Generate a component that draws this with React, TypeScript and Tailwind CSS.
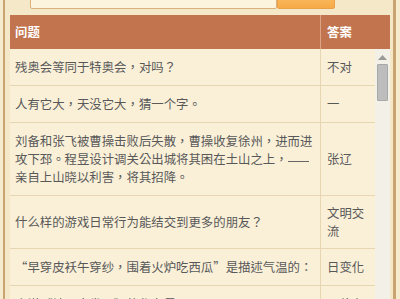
import React from "react";

const rows: { q: React.ReactNode; a: string }[] = [
  { q: "残奥会等同于特奥会，对吗？", a: "不对" },
  { q: "人有它大，天没它大，猜一个字。", a: "一" },
  {
    q: (
      <>
        刘备和张飞被曹操击败后失散，曹操收复徐州，进而进攻下邳。程昱设计调关公出城将其困在土山之上，
        <span className="inline-block w-[21px] border-b border-[#666] align-[2px] h-[8px]" />
        亲自上山晓以利害，将其招降。
      </>
    ),
    a: "张辽",
  },
  { q: "什么样的游戏日常行为能结交到更多的朋友？", a: "文明交流" },
  { q: "“早穿皮袄午穿纱，围着火炉吃西瓜”是描述气温的：", a: "日变化" },
  { q: "小说《地理大发现》的作者是：", a: "哥伦布" },
];

export default function App() {
  return (
    <div
      className="w-[400px] h-[299px] overflow-hidden bg-[#f6ebce] pl-[3px] pr-[4px]"
      style={{ fontFamily: '"Noto Sans CJK TC", "Noto Sans CJK SC", sans-serif' }}
    >
      <div className="h-full border-l-[2px] border-r-[3px] border-[#caa470] bg-[#f5e8c8] pl-[5px] pr-[3px]">
        {/* search bar (cut at top) */}
        <div className="h-[15px] flex items-start">
          <div className="flex h-[30px] -mt-[21px] pl-[20px] shrink-0">
            <div className="w-[247px] h-full bg-[#fdf4de] border border-[#d8b27c] rounded-[2px]" />
            <div className="w-[58px] h-full bg-gradient-to-b from-[#fcd07a] to-[#f7aa48] border border-[#e9a049] rounded-[2px]" />
          </div>
        </div>
        {/* header */}
        <div className="flex h-[34px] bg-[#c1744e] text-white font-bold text-[12.4px] leading-[18px]">
          <div className="w-[311px] border-r border-[#dca385] flex items-center pl-[5px]">问题</div>
          <div className="flex-1 flex items-center pl-[6px]">答案</div>
        </div>
        {/* body */}
        <div className="flex">
          <div className="w-[365px] bg-[#faf0d8] text-[#585858] text-[12.4px] leading-[18px]">
            {rows.map((r, i) => (
              <div key={i} className={`flex border-b border-[#e6d6b2] ${i === 3 ? "min-h-[53px]" : ""}`}>
                <div className={`w-[311px] border-r border-[#e6d6b2] pl-[5px] pr-[6px] flex items-center ${i === 3 ? "py-[8px]" : "py-[9px]"}`}>
                  <div>{r.q}</div>
                </div>
                <div className={`flex-1 pl-[6px] pr-[5px] flex items-center ${i === 3 ? "py-[8px]" : "py-[9px]"}`}>
                  <div>{r.a}</div>
                </div>
              </div>
            ))}
          </div>
          <div className="w-[15px] bg-[#f3f0e8] flex flex-col items-center pt-[6px]">
            <svg width="9" height="5" viewBox="0 0 9 5">
              <path d="M4.5 0 L9 5 L0 5 Z" fill="#9a9a9a" />
            </svg>
            <div className="mt-[4px] w-[11px] h-[37px] bg-[#bdbdbd] border border-[#a8a8a8] rounded-[1px]" />
          </div>
        </div>
      </div>
    </div>
  );
}
